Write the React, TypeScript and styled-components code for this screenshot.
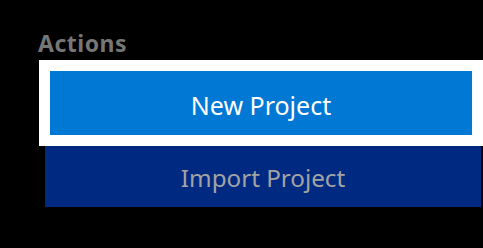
import styled, { createGlobalStyle } from 'styled-components';

const GlobalStyle = createGlobalStyle`
    html, body {
        margin: 0;
        padding: 0;
        background: #000000;
    }
    body {
        font-family: "Noto Sans", "Open Sans", sans-serif;
    }
`;

const Panel = styled.section`
    display: flex;
    flex-direction: column;
    align-items: flex-start;
    padding: 29px 0 0 39px;
    height: 248px;
    box-sizing: border-box;
    overflow: hidden;
`;

const Heading = styled.h2`
    margin: 0 0 3px -1px;
    font-size: 23px;
    line-height: 28px;
    font-weight: 700;
    letter-spacing: 0.5px;
    color: #767676;
`;

const ActionList = styled.div`
    display: flex;
    flex-direction: column;
`;

const ActionButton = styled.button<{ $focused?: boolean }>`
    display: flex;
    align-items: center;
    justify-content: center;
    box-sizing: border-box;
    padding: ${({ $focused }) => ($focused ? '3px 0 0' : '1px 0 0')};
    font-family: inherit;
    font-size: ${({ $focused }) => ($focused ? '25px' : '24.2px')};
    font-weight: 400;
    cursor: pointer;
    width: ${({ $focused }) => ($focused ? '444px' : '436px')};
    height: ${({ $focused }) => ($focused ? '86px' : '61px')};
    margin-left: ${({ $focused }) => ($focused ? '0' : '6px')};
    border: ${({ $focused }) => ($focused ? '11px solid #ffffff' : 'none')};
    background: ${({ $focused }) => ($focused ? '#0078d4' : '#002a82')};
    color: ${({ $focused }) => ($focused ? '#ffffff' : '#a3a3a3')};
    outline: none;
`;

export default function App() {
    return (
        <>
            <GlobalStyle />
            <Panel>
                <Heading>Actions</Heading>
                <ActionList>
                    <ActionButton $focused>New Project</ActionButton>
                    <ActionButton>Import Project</ActionButton>
                </ActionList>
            </Panel>
        </>
    );
}
